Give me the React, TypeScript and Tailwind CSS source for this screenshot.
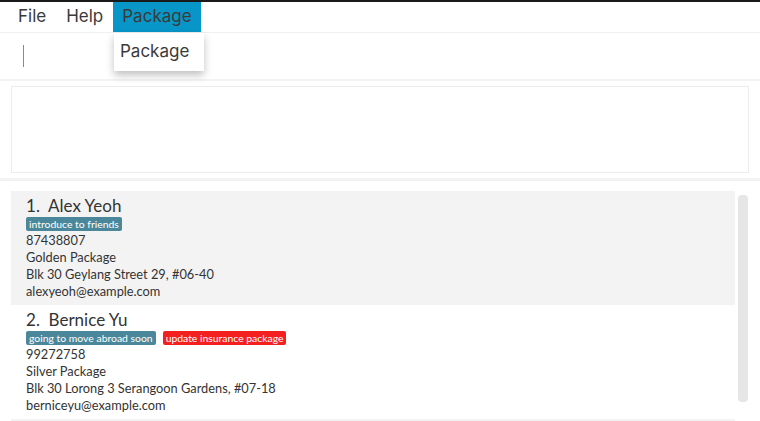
import React from "react";

const font = { fontFamily: "Inter, 'Open Sans', sans-serif" };
const lato = { fontFamily: "Lato, 'Open Sans', sans-serif" };

function Tag({ text, red }: { text: string; red?: boolean }) {
  return (
    <span
      className={`inline-block rounded-[2px] px-[3px] text-[10.4px] leading-[14px] text-white ${
        red ? "bg-[#f41f1f]" : "bg-[#4b879a]"
      }`}
    >
      {text}
    </span>
  );
}

function Card({
  idx,
  name,
  tags,
  phone,
  pkg,
  addr,
  email,
  shaded,
}: {
  idx: number;
  name: string;
  tags: { t: string; red?: boolean }[];
  phone: string;
  pkg: string;
  addr: string;
  email: string;
  shaded?: boolean;
}) {
  return (
    <div className={`h-[114px] pl-[15px] pt-[5px] ${shaded ? "bg-[#f3f3f3]" : "bg-white"}`} style={lato}>
      <div className="text-[17px] leading-[20px] text-[#333]">
        {idx}.&nbsp; {name}
      </div>
      <div className="mt-[1px] flex gap-[7px]">
        {tags.map((t) => (
          <Tag key={t.t} text={t.t} red={t.red} />
        ))}
      </div>
      <div className="text-[12.8px] leading-[17px] text-[#333]">
        <div className="mt-[1px]">{phone}</div>
        <div>{pkg}</div>
        <div>{addr}</div>
        <div>{email}</div>
      </div>
    </div>
  );
}

export default function App() {
  return (
    <div className="relative h-[421px] w-[760px] overflow-hidden bg-white" style={font}>
      <div className="h-[2px] bg-[#1a1a1a]" />
      {/* menu bar */}
      <div className="flex h-[30px] items-stretch pl-[8px] text-[17px] text-[#3a3a3a]">
        <div className="flex items-center px-[10px]">File</div>
        <div className="flex items-center px-[10px]">Help</div>
        <div className="flex items-center bg-[#0896c8] px-[9px]">Package</div>
      </div>
      <div className="h-[1px] bg-[#f0f0f0]" />
      {/* command box */}
      <div className="flex h-[46px] items-center pl-[23px]">
        <div className="h-[22px] w-[1px] bg-[#8a8a8a]" />
      </div>
      <div className="h-[2px] bg-[#f3f3f3]" />
      {/* result display */}
      <div className="h-[97px] px-[11px] pt-[5px]">
        <div className="h-[87px] border border-[#ececec] bg-white" />
      </div>
      <div className="h-[3px] bg-[#f3f3f3]" />
      {/* list */}
      <div className="flex pt-[10px]">
        <div className="ml-[11px] w-[724px]">
          <Card
            idx={1}
            name="Alex Yeoh"
            tags={[{ t: "introduce to friends" }]}
            phone="87438807"
            pkg="Golden Package"
            addr="Blk 30 Geylang Street 29, #06-40"
            email="alexyeoh@example.com"
            shaded
          />
          <Card
            idx={2}
            name="Bernice Yu"
            tags={[{ t: "going to move abroad soon" }, { t: "update insurance package", red: true }]}
            phone="99272758"
            pkg="Silver Package"
            addr="Blk 30 Lorong 3 Serangoon Gardens, #07-18"
            email="berniceyu@example.com"
          />
          <div className="h-[3px] bg-[#f3f3f3]" />
        </div>
        <div className="ml-[3px] mt-[4px] h-[207px] w-[10px] rounded-[4px] bg-[#e6e6e6]" />
      </div>
      {/* dropdown */}
      <div className="absolute left-[114px] top-[33px] flex h-[38px] w-[90px] items-center bg-white pl-[6px] text-[17px] text-[#3a3a3a] shadow-[0_4px_8px_rgba(0,0,0,0.25)]">
        Package
      </div>
    </div>
  );
}
